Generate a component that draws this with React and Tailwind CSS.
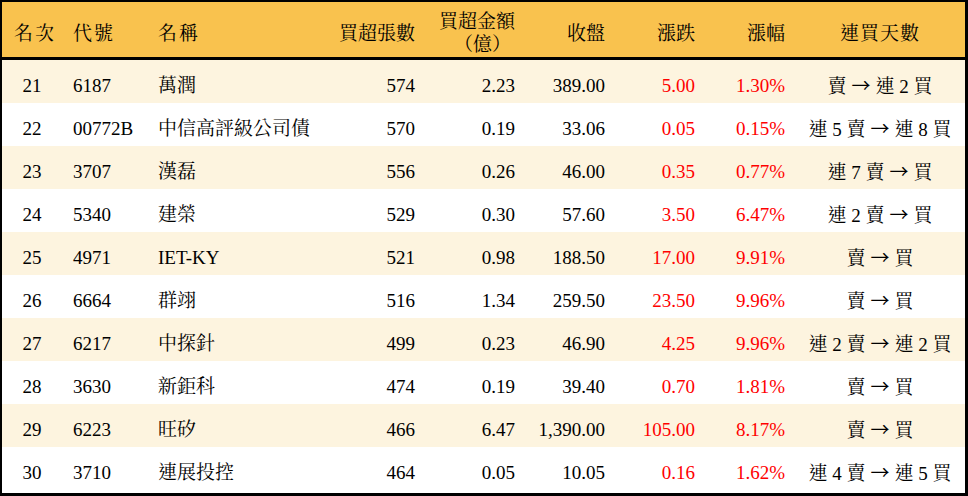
import React from 'react'

const ROWS = [
  ['21', '6187', '萬潤', '574', '2.23', '389.00', '5.00', '1.30%', '賣 → 連 2 買'],
  ['22', '00772B', '中信高評級公司債', '570', '0.19', '33.06', '0.05', '0.15%', '連 5 賣 → 連 8 買'],
  ['23', '3707', '漢磊', '556', '0.26', '46.00', '0.35', '0.77%', '連 7 賣 → 買'],
  ['24', '5340', '建榮', '529', '0.30', '57.60', '3.50', '6.47%', '連 2 賣 → 買'],
  ['25', '4971', 'IET-KY', '521', '0.98', '188.50', '17.00', '9.91%', '賣 → 買'],
  ['26', '6664', '群翊', '516', '1.34', '259.50', '23.50', '9.96%', '賣 → 買'],
  ['27', '6217', '中探針', '499', '0.23', '46.90', '4.25', '9.96%', '連 2 賣 → 連 2 買'],
  ['28', '3630', '新鉅科', '474', '0.19', '39.40', '0.70', '1.81%', '賣 → 買'],
  ['29', '6223', '旺矽', '466', '6.47', '1,390.00', '105.00', '8.17%', '賣 → 買'],
  ['30', '3710', '連展投控', '464', '0.05', '10.05', '0.16', '1.62%', '連 4 賣 → 連 5 買'],
]

const GRID = 'grid grid-cols-[60px_86px_180px_97px_100px_90px_90px_90px_170px] items-center'

function Streak({ text }) {
  const [a, b] = text.split(' → ')
  return (
    <>
      {a}
      <span className="inline-block mx-[5px]" style={{ fontFamily: '"Noto Sans CJK TC", sans-serif' }}>→</span>
      {b}
    </>
  )
}

export default function App() {
  return (
    <div
      className="w-[968px] h-[496px] bg-white text-black border-black border-t-2 border-l-2 border-r-[3px] border-b-[3px] text-[19px] leading-none"
      style={{ fontFamily: '"Liberation Serif", "Noto Serif CJK TC", "Noto Sans CJK TC", serif' }}
    >
      {/* header */}
      <div className={`${GRID} h-[58px] pt-[7px] bg-[#f9c24e] border-b-[3px] border-black`}>
        <div className="pl-[12px] tracking-[2px]">名次</div>
        <div className="pl-[11px] tracking-[2px]">代號</div>
        <div className="pl-[10px] tracking-[2px]">名稱</div>
        <div className="pr-[10px] text-right">買超張數</div>
        <div className="pr-[10px] text-right flex flex-col items-end gap-[4px]">
          <span>買超金額</span>
          <span className="pr-[4px]">（億）</span>
        </div>
        <div className="pr-[10px] text-right">收盤</div>
        <div className="pr-[10px] text-right">漲跌</div>
        <div className="pr-[10px] text-right">漲幅</div>
        <div className="text-center tracking-[1px]">連買天數</div>
      </div>

      {/* rows */}
      {ROWS.map((r, i) => (
        <div key={r[0]} className={`${GRID} h-[43px] pt-[8px] ${i % 2 === 0 ? 'bg-[#fdf4df]' : 'bg-white'}`}>
          <div className="text-center">{r[0]}</div>
          <div className="pl-[11px]">{r[1]}</div>
          <div className="pl-[10px] whitespace-nowrap">{r[2]}</div>
          <div className="pr-[10px] text-right">{r[3]}</div>
          <div className="pr-[10px] text-right">{r[4]}</div>
          <div className="pr-[10px] text-right">{r[5]}</div>
          <div className="pr-[10px] text-right text-[#ff0000]">{r[6]}</div>
          <div className="pr-[10px] text-right text-[#ff0000]">{r[7]}</div>
          <div className="text-center whitespace-nowrap">
            <Streak text={r[8]} />
          </div>
        </div>
      ))}
    </div>
  )
}
